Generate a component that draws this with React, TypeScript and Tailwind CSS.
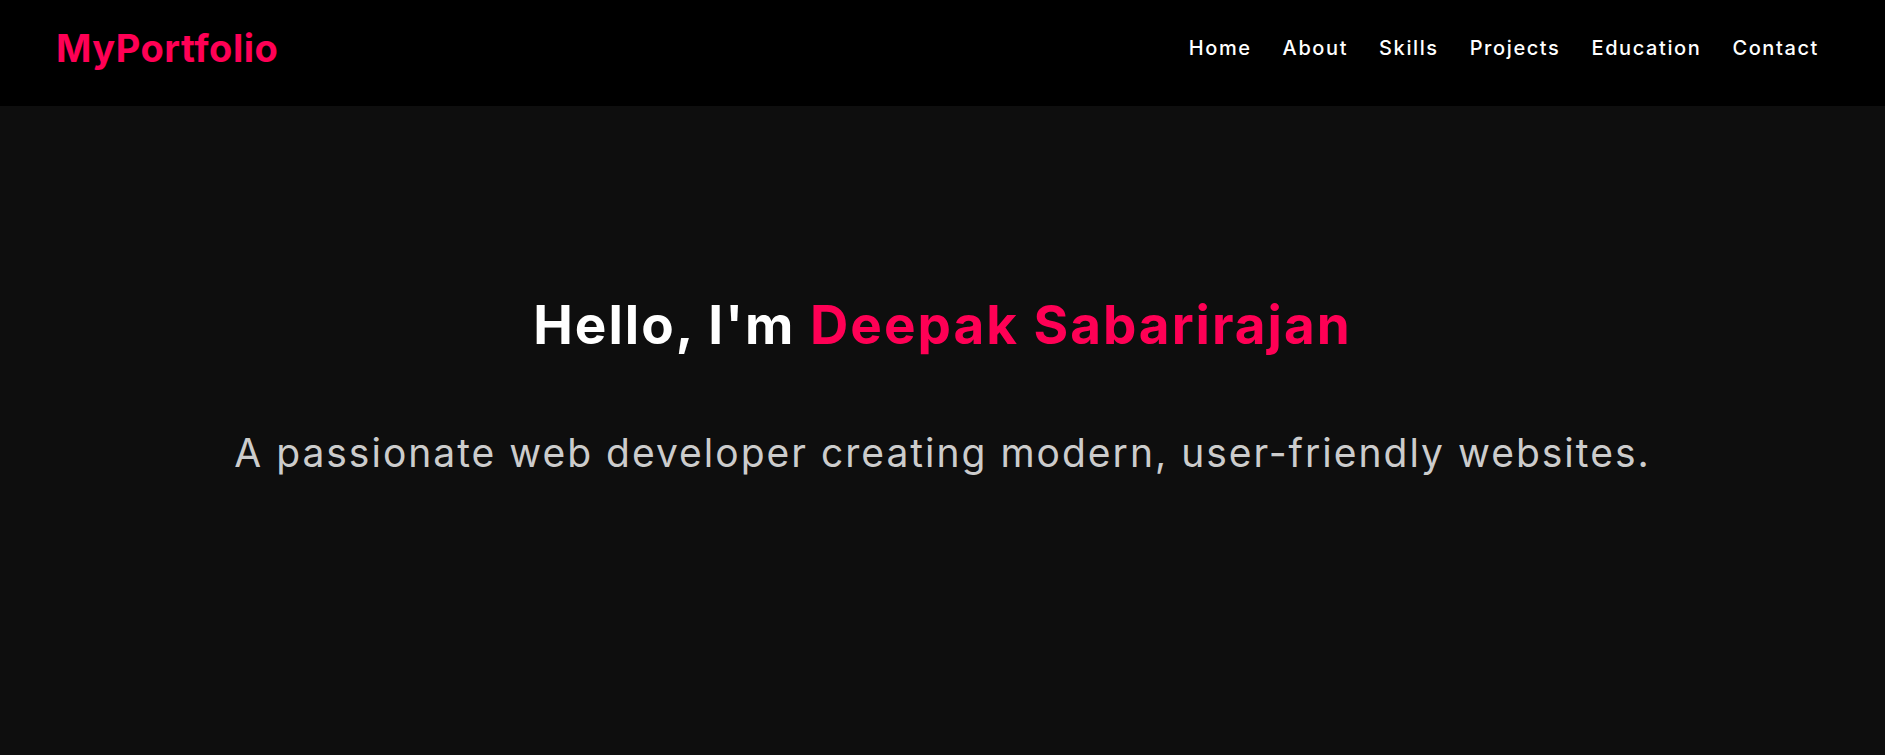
const navLinks = ["Home", "About", "Skills", "Projects", "Education", "Contact"];

export default function App() {
  return (
    <div className="min-h-screen bg-[#0e0e0e] font-['Inter',sans-serif]">
      {/* Navbar */}
      <nav className="flex h-[106px] items-center justify-between bg-black pb-[10px] pl-[56px] pr-[66px]">
        <a href="#" className="text-[38px] font-bold leading-none tracking-[0.5px] text-[#ff0055]">
          MyPortfolio
        </a>
        <ul className="flex items-center gap-[31px]">
          {navLinks.map((link) => (
            <li key={link}>
              <a href="#" className="text-[20px] font-medium tracking-[1.6px] text-white">
                {link}
              </a>
            </li>
          ))}
        </ul>
      </nav>

      {/* Hero */}
      <section className="flex flex-col items-center pt-[186px] text-center">
        <h1 className="text-[53px] font-bold leading-tight tracking-[2px] text-white">
          Hello, I'm <span className="text-[#ff0055]">Deepak Sabarirajan</span>
        </h1>
        <p className="mt-[66px] text-[39px] tracking-[2px] text-[#cccccc]">
          A passionate web developer creating modern, user-friendly websites.
        </p>
      </section>
    </div>
  );
}
